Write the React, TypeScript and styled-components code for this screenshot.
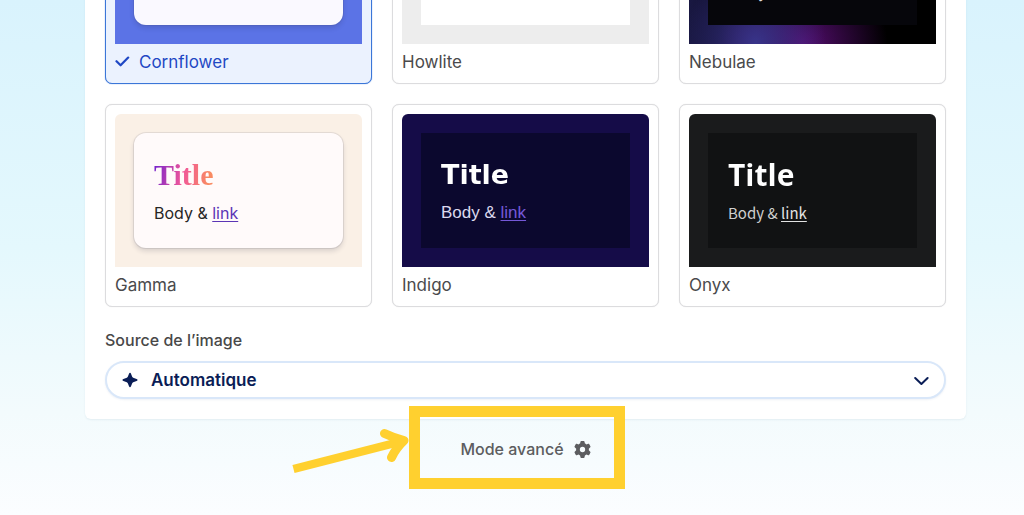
import React, { useState } from "react";
import styled, { createGlobalStyle, css } from "styled-components";
import { FaGear } from "react-icons/fa6";

const GlobalStyle = createGlobalStyle`
  *, *::before, *::after { box-sizing: border-box; }
  body {
    margin: 0;
    font-family: Inter, "Liberation Sans", sans-serif;
    color: #484848;
  }
`;

const Page = styled.main`
  min-height: 100vh;
  padding: 0 58px 24px 85px;
  overflow: hidden;
  background: linear-gradient(180deg, #d9f3fd 0%, #e4f8fd 48%, #f3fbfd 80%, #fbfdff 100%);
`;

const Panel = styled.section`
  margin-top: -139px;
  padding: 20px;
  border-radius: 6px;
  background: #fff;
  box-shadow: 0 1px 2px rgba(30, 80, 110, 0.08);
`;

const ThemeGrid = styled.div`
  display: grid;
  grid-template-columns: repeat(3, 1fr);
  gap: 20px;
`;

const HiddenRadio = styled.input`
  position: absolute;
  opacity: 0;
  pointer-events: none;
`;

const ThemeCard = styled.label<{ $selected: boolean }>`
  position: relative;
  display: block;
  padding: 9px;
  border: 1px solid ${(p) => (p.$selected ? "#3b76d8" : "#dcdcde")};
  border-radius: 7px;
  background: ${(p) => (p.$selected ? "#ebf2fe" : "#fff")};
  box-shadow: 0 0 1px ${(p) => (p.$selected ? "#3b76d8" : "#dcdcde")};
  cursor: pointer;
`;

const Preview = styled.div<{ $background: string }>`
  height: 153px;
  padding: 19px;
  border-radius: 6px 6px 0 0;
  background: ${(p) => p.$background};
`;

const Slide = styled.div<{ $background: string; $raised?: boolean }>`
  display: flex;
  flex-direction: column;
  justify-content: center;
  gap: 8px;
  height: 100%;
  padding: 0 20px;
  background: ${(p) => p.$background};
  ${(p) =>
    p.$raised &&
    css`
      border-radius: 12px;
      box-shadow: 0 0 0 1px rgba(60, 60, 90, 0.1), 0 3px 5px rgba(40, 40, 60, 0.16);
    `}
`;

const SlideTitle = styled.span<{ $font: string; $size: number; $line: number; $fill: string }>`
  align-self: flex-start;
  font-family: ${(p) => p.$font};
  font-size: ${(p) => p.$size}px;
  line-height: ${(p) => p.$line}px;
  font-weight: 700;
  color: transparent;
  background: ${(p) => p.$fill};
  background-clip: text;
`;

const SlideBody = styled.span<{ $font: string; $size: number; $color: string }>`
  font-family: ${(p) => p.$font};
  font-size: ${(p) => p.$size}px;
  line-height: 24px;
  color: ${(p) => p.$color};
`;

const SlideLink = styled.a<{ $color: string; $plain?: boolean }>`
  color: ${(p) => p.$color};
  text-decoration: ${(p) => (p.$plain ? "none" : "underline")};
  text-underline-offset: 2px;
`;

const ThemeName = styled.span<{ $selected: boolean }>`
  display: flex;
  align-items: center;
  gap: 9px;
  padding-top: 6px;
  font-size: 17px;
  line-height: 24px;
  color: ${(p) => (p.$selected ? "#1f48c4" : "#4a4a4c")};
`;

const FieldLabel = styled.label`
  display: block;
  margin: 20px 0 8px;
  font-size: 16px;
  line-height: 26px;
  font-weight: 500;
`;

const SelectBox = styled.div`
  position: relative;
  color: #0a1d56;
`;

const Select = styled.select`
  display: block;
  width: 100%;
  height: 38px;
  padding: 0 44px;
  border: 2px solid #d9e7f9;
  border-radius: 19px;
  background: #fff;
  box-shadow: 0 1px 2px rgba(40, 80, 140, 0.08);
  appearance: none;
  font: 600 17px/24px Inter, "Liberation Sans", sans-serif;
  color: inherit;
`;

const SelectIcon = styled.svg<{ $side: "left" | "right" }>`
  position: absolute;
  top: 11px;
  ${(p) => p.$side}: 17px;
  width: 16px;
  height: 16px;
  pointer-events: none;
`;

const Footer = styled.footer`
  position: relative;
  display: flex;
  justify-content: center;
  padding-top: 15px;
`;

const ModeButton = styled.button`
  display: flex;
  align-items: center;
  gap: 10px;
  padding: 0 16px;
  height: 30px;
  border: 0;
  background: none;
  font: 500 16px/30px Inter, "Liberation Sans", sans-serif;
  color: #5c5d60;
  cursor: pointer;
`;

const Callout = styled.div`
  position: absolute;
  top: -13px;
  left: calc(50% - 117px);
  width: 216px;
  height: 83px;
  border: 11px solid #ffd02f;
  pointer-events: none;
`;

const CalloutArrow = styled.svg`
  position: absolute;
  top: 9px;
  left: calc(50% - 235px);
  width: 120px;
  height: 48px;
  pointer-events: none;
`;

type Theme = {
  name: string;
  backdrop: string;
  slide: string;
  raised?: boolean;
  title?: { font: string; size: number; line: number; fill: string };
  body?: { font: string; size: number; color: string; link: string; plainLink?: boolean };
};

const inter = 'Inter, "Liberation Sans", sans-serif';
const flat = (color: string) => `linear-gradient(${color}, ${color})`;

const themes: Theme[] = [
  { name: "Cornflower", backdrop: "#5b73e6", slide: "#faf9ff", raised: true },
  { name: "Howlite", backdrop: "#ededed", slide: "#fff" },
  {
    name: "Nebulae",
    backdrop:
      "radial-gradient(ellipse 70px 85px at 27% 100%, #38348a 0%, rgba(56,52,138,0) 100%), radial-gradient(ellipse 85px 75px at 46% 100%, #560d70 0%, rgba(86,13,112,0) 100%), linear-gradient(90deg, #191842 0%, #0b0820 25%, #000 60%)",
    slide: "#06060b",
    title: { font: inter, size: 32, line: 41, fill: flat("#fff") },
    body: { font: inter, size: 16, color: "#ddd", link: "#ddd", plainLink: true },
  },
  {
    name: "Gamma", backdrop: "#faf0e6", slide: "#fffafa", raised: true,
    title: {
      font: '"Liberation Serif", serif', size: 30, line: 36,
      fill: "linear-gradient(100deg, #6d1fd0 0%, #f0569a 48%, #f98a62 90%)",
    },
    body: { font: inter, size: 16, color: "#272525", link: "#5b35b5" },
  },
  {
    name: "Indigo", backdrop: "#150c48", slide: "#0b082e",
    title: { font: '"DejaVu Sans", sans-serif', size: 27, line: 36, fill: flat("#fff") },
    body: { font: '"Liberation Sans", sans-serif', size: 17, color: "#dcd9ee", link: "#7558d8" },
  },
  {
    name: "Onyx", backdrop: "#1a1b1c", slide: "#111213",
    title: { font: '"Open Sans", sans-serif', size: 30, line: 36, fill: flat("#fff") },
    body: { font: '"Noto Sans CJK SC", sans-serif', size: 15, color: "#cfcfcf", link: "#e2e2e2" },
  },
];

export default function App() {
  const [selected, setSelected] = useState("Cornflower");

  return (
    <>
      <GlobalStyle />
      <Page>
        <Panel>
          <ThemeGrid role="radiogroup">
            {themes.map(({ name, backdrop, slide, raised, title, body }) => (
              <ThemeCard key={name} $selected={name === selected}>
                <HiddenRadio
                  type="radio"
                  name="theme"
                  value={name}
                  checked={name === selected}
                  onChange={() => setSelected(name)}
                />
                <Preview $background={backdrop}>
                  <Slide $background={slide} $raised={raised}>
                    {title && (
                      <SlideTitle $font={title.font} $size={title.size} $line={title.line} $fill={title.fill}>
                        Title
                      </SlideTitle>
                    )}
                    {body && (
                      <SlideBody $font={body.font} $size={body.size} $color={body.color}>
                        Body &amp;{" "}
                        <SlideLink href="#" $color={body.link} $plain={body.plainLink}>link</SlideLink>
                      </SlideBody>
                    )}
                  </Slide>
                </Preview>
                <ThemeName $selected={name === selected}>
                  {name === selected && (
                    <svg width="15" height="12" viewBox="0 0 15 12" fill="none" stroke="currentColor" strokeWidth="2.2" strokeLinecap="round" strokeLinejoin="round" aria-hidden="true">
                      <path d="M1.500 5.200 5.600 9.300 13.200 1.600" />
                    </svg>
                  )}
                  {name}
                </ThemeName>
              </ThemeCard>
            ))}
          </ThemeGrid>
          <FieldLabel htmlFor="image-source">Source de l’image</FieldLabel>
          <SelectBox>
            <Select id="image-source" defaultValue="auto">
              <option value="auto">Automatique</option>
            </Select>
            <SelectIcon $side="left" viewBox="0 0 16 16" fill="currentColor" aria-hidden="true">
              <path d="M8 .8C8.6.8 8.8 1.2 9 1.7L10.2 4.8Q10.5 5.5 11.2 5.8L14.6 7.1Q15.6 7.5 15.6 8T14.6 8.9L11.2 10.2Q10.5 10.5 10.2 11.2L9 14.3Q8.6 15.2 8 15.2T7 14.3L5.8 11.2Q5.5 10.5 4.8 10.2L1.4 8.9Q.4 8.5.4 8T1.4 7.1L4.8 5.8Q5.5 5.5 5.8 4.8L7 1.7Q7.4.8 8 .8Z" />
            </SelectIcon>
            <SelectIcon $side="right" viewBox="0 0 16 16" fill="none" stroke="currentColor" strokeWidth="2" strokeLinecap="round" strokeLinejoin="round" aria-hidden="true">
              <path d="M2.200 6 8.400 12 14.600 6" />
            </SelectIcon>
          </SelectBox>
        </Panel>
        <Footer>
          <ModeButton type="button">
            Mode avancé
            <FaGear size={17} aria-hidden="true" />
          </ModeButton>
          <Callout />
          <CalloutArrow viewBox="0 0 120 48" fill="none" stroke="#ffd02f" strokeWidth="8.500" strokeLinejoin="round" aria-hidden="true">
            <path d="M2.500 41 110 13.500" />
            <path d="M93.500 5.500Q103 10 113 12.500Q105 20 100.500 29.500" strokeWidth="9" strokeLinecap="round" />
          </CalloutArrow>
        </Footer>
      </Page>
    </>
  );
}
